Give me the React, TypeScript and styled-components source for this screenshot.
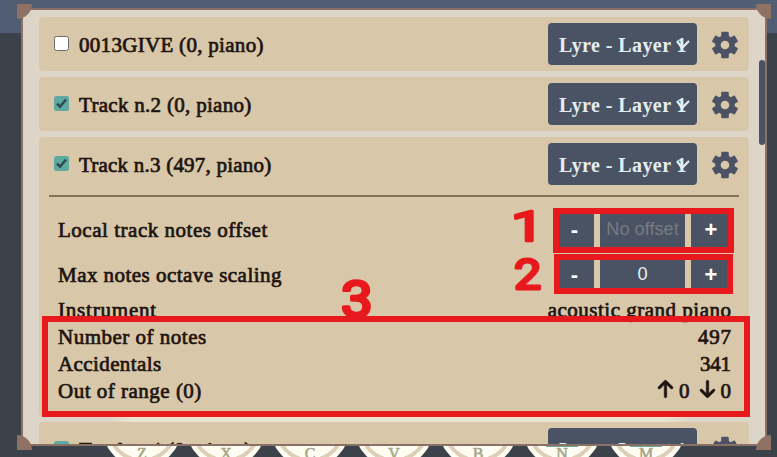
import React from "react";
import styled, { createGlobalStyle } from "styled-components";
import { FaArrowDown, FaArrowUp } from "react-icons/fa6";

const GlobalStyle = createGlobalStyle`
  * { box-sizing: border-box; }
  body { margin: 0; background: #3b4249; overflow: hidden; }
`;

const Page = styled.div`
  position: relative;
  width: 777px;
  height: 457px;
  overflow: hidden;
  padding: 8px 10px 0 21px;
  background: linear-gradient(#515d72 0 33px, #3b4249 33px);
  font-family: "Liberation Serif", serif;
  font-size: 21px;
  color: #1d1410;
`;

const Keyboard = styled.div`
  position: absolute;
  left: 102px;
  top: 387px;
  display: flex;
  gap: 4px;
`;

const Key = styled.div<{ $marked?: boolean }>`
  width: 80px;
  height: 80px;
  border-radius: 50%;
  background: ${(p) =>
    p.$marked
      ? "linear-gradient(#6fa99f, #6fa99f) 50% 0 / 32px 60px no-repeat, "
      : ""}radial-gradient(circle, #fffcf1 0 31px, #ddd0b9 31.5px 35px, #fffcf1 35.5px);
  display: flex;
  justify-content: center;
  padding-top: 57px;
  font-size: 16px;
  line-height: 20px;
  color: #a5a888;
  -webkit-text-stroke: 0.6px #a5a888;
`;

const Panel = styled.main`
  position: relative;
  width: 746px;
  height: 438px;
  border: 2px solid #8a7165;
  background: linear-gradient(90deg, transparent 85px, #e9e3d1 110px 640px, transparent 670px)
      0 406px / 100% 8px no-repeat,
    #ddd5c7;
  overflow: hidden;
  padding: 7px 16px 0;
  display: flex;
  flex-direction: column;
  gap: 6px;
`;

const Corner = styled.i<{ $x: "left" | "right"; $y: "top" | "bottom" }>`
  position: absolute;
  width: 15px;
  height: 15px;
  ${(p) => (p.$x === "left" ? "left: 17px;" : "right: 6px;")}
  ${(p) => (p.$y === "top" ? "top: 4px;" : "bottom: 7px;")}
  background: #8f7264;
  border-${(p) => (p.$y === "top" ? "bottom" : "top")}-${(p) =>
    p.$x === "left" ? "right" : "left"}-radius: 15px;
`;

const Scrollbar = styled.i`
  position: absolute;
  right: 0;
  top: 50px;
  width: 6px;
  height: 85px;
  border-radius: 3px;
  background: #4b5265;
`;

const Card = styled.section<{ $open?: boolean }>`
  flex: none;
  width: 710px;
  height: ${(p) => (p.$open ? "279px" : "54px")};
  border-radius: 4px;
  background: #d9c7a9;
`;

const Head = styled.header`
  height: 54px;
  padding: 0 11px 0 14px;
  display: flex;
  align-items: center;
`;

const Check = styled.span<{ $on: boolean }>`
  width: 15px;
  height: 15px;
  margin: 0 10px 2px 1px;
  border-radius: 2.5px;
  border: ${(p) => (p.$on ? "none" : "1px solid #6b6b6b")};
  background: ${(p) => (p.$on ? "#5faaa0" : "#fff")};
  display: flex;
  svg { width: 15px; height: 15px; }
`;

const Text = styled.span<{ $track: number }>`
  letter-spacing: ${(p) => p.$track}px;
  margin-right: ${(p) => -p.$track}px;
  padding-top: 1px;
  -webkit-text-stroke: 0.7px currentColor;
  white-space: pre;
`;

const TrackName = styled(Text)`
  padding-top: 2px;
`;

const Select = styled.div`
  position: relative;
  margin-left: auto;
  width: 149px;
  height: 42px;
  padding-left: 11px;
  border-radius: 4px;
  background: #495363;
  color: #e6edf0;
  font-size: 20px;
  font-weight: bold;
  line-height: 44px;
`;

const SelectLabel = styled.span`
  letter-spacing: 0.42px;
`;

const Chevron = styled.svg`
  position: absolute;
  right: 7px;
  top: 16px;
  width: 14px;
  height: 11px;
`;

const GearIcon = styled.svg`
  width: 28px;
  height: 28px;
  margin: 1px -1px 0 14px;
`;

const Details = styled.div`
  margin: 4px 10px 0;
  padding: 9px 8px 0 9px;
  border-top: 2px solid #88715b;
`;

const Line = styled.div<{ $h: number }>`
  height: ${(p) => p.$h}px;
  display: flex;
  align-items: center;
  justify-content: space-between;
`;

const Stepper = styled.div<{ $h: number }>`
  display: flex;
  gap: 6px;
  height: ${(p) => p.$h}px;
  font-family: "Liberation Sans", sans-serif;
`;

const StepButton = styled.span<{ $w: number }>`
  width: ${(p) => p.$w}px;
  background: #495363;
  color: #fff;
  display: flex;
  align-items: center;
  justify-content: center;
  font-weight: bold;
  font-size: 22px;
`;

const StepValue = styled.span<{ $muted?: boolean }>`
  width: 85px;
  padding-bottom: 1px;
  background: #495363;
  color: ${(p) => (p.$muted ? "#777a80" : "#e6edf0")};
  display: flex;
  align-items: center;
  justify-content: center;
  font-size: 18.2px;
  white-space: nowrap;
`;

const Range = styled.span`
  display: flex;
  align-items: center;
  gap: 6px;
  svg {
    width: 17px;
    height: 20px;
    margin: 0 0 4px -1px;
    stroke: currentColor;
    stroke-width: 14px;
  }
  svg:not(:first-child) { margin-left: 3px; }
`;

const RangeCount = styled(Text)`
  margin-left: -1px;
`;

const Frame = styled.div<{ $x: number; $y: number; $w: number; $h: number }>`
  position: absolute;
  left: ${(p) => p.$x}px;
  top: ${(p) => p.$y}px;
  width: ${(p) => p.$w}px;
  height: ${(p) => p.$h}px;
  border: 6px solid #e8191d;
`;

const MarkBox = styled.svg<{ $x: number; $y: number }>`
  position: absolute;
  left: ${(p) => p.$x}px;
  top: ${(p) => p.$y}px;
  overflow: visible;
  text {
    font: 400 39px Roboto, sans-serif;
    fill: #e8191d;
    stroke: #e8191d;
    stroke-width: 2.5px;
    stroke-linejoin: round;
    stroke-linecap: round;
  }
`;

function Mark({ x, y, sx, sy = 1, children }: {
  x: number; y: number; sx: number; sy?: number; children: string;
}) {
  return (
    <MarkBox $x={x} $y={y} width="24" height="34">
      <text x="0" y="0" transform={`translate(0 31) scale(${sx} ${sy})`}>{children}</text>
    </MarkBox>
  );
}

function Gear() {
  return (
    <GearIcon viewBox="-14 -14 28 28" fill="#4b5265">
      {[0, 60, 120].map((a) => (
        <rect key={a} x="-3.8" y="-13.2" width="7.6" height="26.4" rx="1.2" transform={`rotate(${a})`} />
      ))}
      <circle r="9.8" />
      <circle r="4.3" fill="#d9c7a9" />
    </GearIcon>
  );
}

function TrackHead({ name, on, track }: { name: string; on: boolean; track: number }) {
  return (
    <Head>
      <Check $on={on}>
        {on && (
          <svg viewBox="0 0 15 15" fill="none" stroke="#304a50" strokeWidth="2.5">
            <path d="M3 7.7 6 10.7 12 3.5" />
          </svg>
        )}
      </Check>
      <TrackName $track={track}>{name}</TrackName>
      <Select>
        <SelectLabel>Lyre - Layer 1</SelectLabel>
        <Chevron viewBox="0 0 14 11" fill="none" stroke="#e6edf0" strokeWidth="2.2">
          <path d="M1 2 6 9 13 2" />
        </Chevron>
      </Select>
      <Gear />
    </Head>
  );
}

export default function App() {
  return (
    <Page>
      <GlobalStyle />
      <Keyboard>
        {["Z", "X", "C", "V", "B", "N", "M"].map((k) => (
          <Key key={k} $marked={k === "N" || k === "M"}>{k}</Key>
        ))}
      </Keyboard>
      <Panel>
        <Card><TrackHead name="0013GIVE (0, piano)" on={false} track={0.3} /></Card>
        <Card><TrackHead name="Track n.2 (0, piano)" on track={0.3} /></Card>
        <Card $open>
          <TrackHead name="Track n.3 (497, piano)" on track={0.22} />
          <Details>
            <Line $h={48}>
              <Text $track={0.52}>Local track notes offset</Text>
              <Stepper $h={35}>
                <StepButton $w={39}>-</StepButton>
                <StepValue $muted>No offset</StepValue>
                <StepButton $w={40}>+</StepButton>
              </Stepper>
            </Line>
            <Line $h={42}>
              <Text $track={0.46}>Max notes octave scaling</Text>
              <Stepper $h={32}>
                <StepButton $w={39}>-</StepButton>
                <StepValue>0</StepValue>
                <StepButton $w={40}>+</StepButton>
              </Stepper>
            </Line>
            <Line $h={27}>
              <Text $track={0.8}>Instrument</Text>
              <Text $track={0.5}>acoustic grand piano</Text>
            </Line>
            <Line $h={27}>
              <Text $track={0.5}>Number of notes</Text>
              <Text $track={0.8}>497</Text>
            </Line>
            <Line $h={27}>
              <Text $track={0.4}>Accidentals</Text>
              <Text $track={-0.3}>341</Text>
            </Line>
            <Line $h={27}>
              <Text $track={0.5}>Out of range (0)</Text>
              <Range>
                <FaArrowUp />
                <RangeCount $track={0}>0</RangeCount>
                <FaArrowDown />
                <RangeCount $track={1}>0</RangeCount>
              </Range>
            </Line>
          </Details>
        </Card>
        <Card><TrackHead name="Track n.4 (0, piano)" on track={0.3} /></Card>
        <Scrollbar />
      </Panel>
      <Corner $x="left" $y="top" />
      <Corner $x="right" $y="top" />
      <Corner $x="left" $y="bottom" />
      <Corner $x="right" $y="bottom" />
      <Frame $x={553} $y={208} $w={181} $h={45} />
      <Frame $x={554} $y={254} $w={179} $h={40} />
      <Mark x={511} y={210} sx={1.5} sy={1.1}>1</Mark>
      <Mark x={514} y={258} sx={1.25} sy={1.1}>2</Mark>
      <Mark x={341} y={286} sx={1.45} sy={1.3}>3</Mark>
      <Frame $x={42} $y={316} $w={708} $h={101} />
    </Page>
  );
}
